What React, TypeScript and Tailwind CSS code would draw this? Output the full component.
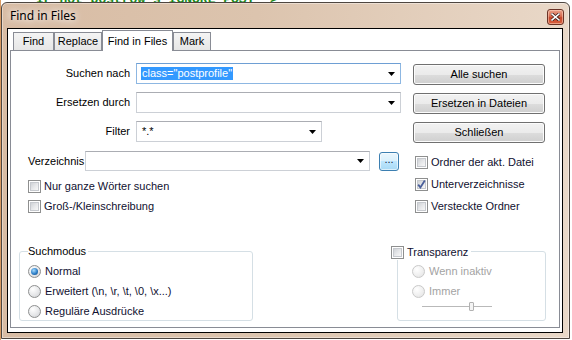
import React from "react";

const btn =
  "flex h-[21px] w-[132px] items-center justify-center rounded-[3px] border border-[#707070] bg-[linear-gradient(#f2f2f2_0%,#ebebeb_50%,#dddddd_50%,#cfcfcf_100%)] text-[11px] text-black shadow-[inset_0_0_0_1px_#fcfcfc]";

function Arrow() {
  return (
    <svg width="7" height="4" viewBox="0 0 7 4" className="shrink-0">
      <path d="M0 0h7L3.5 4z" fill="#000" />
    </svg>
  );
}

function Combo({
  width,
  focused,
  height = 21,
  children,
}: {
  width: string;
  focused?: boolean;
  height?: number;
  children?: React.ReactNode;
}) {
  return (
    <div
      className={`flex items-center justify-between bg-white pl-[3px] pr-[5px] ${width} ${
        height === 21 ? "h-[21px]" : "h-[20px]"
      } ${
        focused
          ? "border border-[#8db7e2] border-t-[#6e9fd4]"
          : "border border-[#ccd0d6] border-t-[#abadb3]"
      }`}
    >
      <div className="flex min-w-0 items-center">{children}</div>
      <Arrow />
    </div>
  );
}

function Check({ checked, label }: { checked?: boolean; label: string }) {
  return (
    <div className="flex h-[13px] items-center gap-[3px] leading-[13px]">
      <div className="relative h-[13px] w-[13px] shrink-0 border border-[#8e8f8f] bg-white p-[1px]">
        <div className="h-full w-full border border-[#c6c9ce] bg-[linear-gradient(135deg,#cfd2d6_0%,#e8e9eb_55%,#f7f7f7_100%)]" />
        {checked && (
          <svg
            width="11"
            height="11"
            viewBox="0 0 11 11"
            className="absolute left-[0px] top-[0px]"
          >
            <path
              d="M2.2 5.6 L4.4 8.4 L8.8 1.6"
              stroke="#4a5f9a"
              strokeWidth="1.8"
              fill="none"
            />
          </svg>
        )}
      </div>
      <span className="text-[#101030]">{label}</span>
    </div>
  );
}

function Radio({
  selected,
  disabled,
  label,
}: {
  selected?: boolean;
  disabled?: boolean;
  label: string;
}) {
  return (
    <div className="flex h-[13px] items-center gap-[4px] leading-[13px]">
      <div
        className={`flex h-[13px] w-[13px] shrink-0 items-center justify-center rounded-full border ${
          disabled
            ? "border-[#c9c9c9] bg-[radial-gradient(circle_at_35%_30%,#ffffff_0%,#eeeeee_60%,#e0e0e0_100%)]"
            : "border-[#8e8f8f] bg-[radial-gradient(circle_at_35%_30%,#ffffff_0%,#e6e7e9_55%,#cdd0d4_100%)]"
        }`}
      >
        {selected && (
          <div className="h-[7px] w-[7px] rounded-full bg-[radial-gradient(circle_at_40%_35%,#a8dcff_0%,#2d7fc8_55%,#0b3f7a_100%)]" />
        )}
      </div>
      <span className={disabled ? "text-[#a3a3a3]" : "text-[#101030]"}>
        {label}
      </span>
    </div>
  );
}

function Tab({ label, active, w }: { label: string; active?: boolean; w: string }) {
  if (active) {
    return (
      <div
        className={`relative z-10 mb-[-1px] flex h-[21px] items-center justify-center border border-b-0 border-[#898c95] bg-white ${w}`}
      >
        {label}
      </div>
    );
  }
  return (
    <div
      className={`flex h-[18px] items-center justify-center border border-b-0 border-[#898c95] bg-[linear-gradient(#f4f4f4,#e6e6e6)] ${w}`}
    >
      {label}
    </div>
  );
}

export default function App() {
  return (
    <div className="relative h-[340px] w-[572px] overflow-hidden bg-white font-['Liberation_Sans',Arial,sans-serif] text-[11px] text-black">
      {/* editor behind the dialog */}
      <div className="absolute left-[36px] top-[-10px] whitespace-pre font-['Liberation_Mono',monospace] text-[13px] font-bold text-[#1a8a1a]">
        IF not postrow s IGNORE POST -&gt;
      </div>
      <div className="absolute left-0 top-0 h-full w-[1px] bg-[#d99a62]" />

      {/* dialog window */}
      <div className="absolute left-[1px] top-[2px] flex h-[337px] w-[569px] flex-col rounded-t-[6px] border border-[#4e4640] bg-[linear-gradient(90deg,#d8bca4_0%,#dcc4ae_45%,#e9d8c8_100%)] pb-[5px] pl-[5px] pr-[6px] shadow-[inset_0_0_0_1px_rgba(255,255,255,0.4)]">
        <div className="flex h-[25px] shrink-0 items-start justify-between">
          <span className="ml-[3px] mt-[5px] font-['Noto_Sans',sans-serif] text-[12px] leading-[16px] text-black [text-shadow:0_0_6px_#fff,0_0_10px_#fff]">
            Find in Files
          </span>
          <div className="mr-[-1px] mt-[6px] flex h-[16px] w-[17px] items-center justify-center rounded-[3px] border border-[#6b3326] bg-[linear-gradient(#eba28b_0%,#d66a4e_45%,#c4452a_55%,#d9613f_100%)] shadow-[inset_0_0_0_1px_rgba(255,220,200,0.5)]">
            <svg width="9" height="8" viewBox="0 0 9 8">
              <path
                d="M1 1 L8 7 M8 1 L1 7"
                stroke="#3a1a14"
                strokeWidth="3"
                strokeLinecap="square"
              />
              <path
                d="M1 1 L8 7 M8 1 L1 7"
                stroke="#fff"
                strokeWidth="1.6"
                strokeLinecap="square"
              />
            </svg>
          </div>
        </div>

        {/* client area */}
        <div className="flex flex-1 flex-col border border-black bg-white px-[2px] pb-[4px]">
          <div className="flex h-[21px] shrink-0 items-end pl-[3px]">
            <Tab label="Find" w="w-[41px]" />
            <Tab label="Replace" w="w-[48px]" />
            <Tab label="Find in Files" w="w-[71px]" active />
            <Tab label="Mark" w="w-[38px]" />
          </div>

          <div className="flex flex-1 flex-col border border-[#898c95] pl-[17px] pr-[13px] pt-[12px]">
            {/* search rows + buttons */}
            <div className="flex">
              <div className="flex w-[373px] flex-col gap-[8px]">
                <div className="flex items-center gap-[6px]">
                  <span className="w-[102px] text-right">Suchen nach</span>
                  <Combo width="w-[265px]" focused>
                    <span className="ml-[1px] bg-[#3399ff] px-[1px] leading-[13px] text-white">
                      class="postprofile"
                    </span>
                  </Combo>
                </div>
                <div className="flex items-center gap-[6px]">
                  <span className="w-[102px] text-right">Ersetzen durch</span>
                  <Combo width="w-[265px]" />
                </div>
                <div className="flex items-center gap-[6px]">
                  <span className="w-[102px] text-right">Filter</span>
                  <Combo width="w-[186px]">
                    <span className="ml-[2px]">*.*</span>
                  </Combo>
                </div>
              </div>
              <div className="ml-[12px] flex flex-col gap-[8px] pt-[1px]">
                <div className={btn}>Alle suchen</div>
                <div className={btn}>Ersetzen in Dateien</div>
                <div className={btn}>Schließen</div>
              </div>
            </div>

            {/* directory + options */}
            <div className="mt-[8px] flex">
              <div className="flex w-[371px] flex-col">
                <div className="flex h-[20px] items-center">
                  <span className="w-[57px]">Verzeichnis</span>
                  <Combo width="w-[285px]" height={20} />
                  <div className="ml-[9px] flex h-[19px] w-[20px] items-center justify-center rounded-[3px] border border-[#3c7fb1] bg-[linear-gradient(#eaf6fd_0%,#d9f0fc_50%,#bee6fd_50%,#a7d9f5_100%)] pb-[3px] text-[11px] leading-none text-[#1a2a40] shadow-[inset_0_0_0_1px_rgba(255,255,255,0.6)]">
                    ...
                  </div>
                </div>
                <div className="mt-[9px]">
                  <Check label="Nur ganze Wörter suchen" />
                </div>
                <div className="mt-[7px]">
                  <Check label="Groß-/Kleinschreibung" />
                </div>
              </div>
              <div className="ml-[16px] flex flex-col gap-[9px] pt-[5px]">
                <Check label="Ordner der akt. Datei" />
                <Check label="Unterverzeichnisse" checked />
                <Check label="Versteckte Ordner" />
              </div>
            </div>

            {/* group boxes */}
            <div className="mt-[38px] flex">
              <div className="relative ml-[-9px] h-[70px] w-[234px] rounded-[3px] border border-[#d5dfe5] pl-[8px] pt-[13px]">
                <span className="absolute left-[8px] top-[-7px] bg-white pr-[2px] leading-[13px]">
                  Suchmodus
                </span>
                <div className="flex flex-col gap-[7px]">
                  <Radio label="Normal" selected />
                  <Radio label="Erweitert (\n, \r, \t, \0, \x...)" />
                  <Radio label="Reguläre Ausdrücke" />
                </div>
              </div>

              <div className="relative ml-[144px] h-[70px] w-[149px] rounded-[3px] border border-[#d5dfe5] pl-[14px] pt-[13px]">
                <div className="absolute left-[-7px] top-[-6px] bg-white pb-[1px] pr-[3px]">
                  <Check label="Transparenz" />
                </div>
                <div className="flex flex-col gap-[7px]">
                  <Radio label="Wenn inaktiv" disabled />
                  <Radio label="Immer" disabled />
                </div>
                <div className="relative ml-[10px] mt-[4px] h-[9px] w-[70px]">
                  <div className="absolute left-0 top-[4px] h-[2px] w-full border-t border-[#b9b9b9] bg-white" />
                  <div className="absolute left-[47px] top-0 h-[9px] w-[5px] rounded-[1px] border border-[#b2b2b2] bg-[#f4f4f4]" />
                </div>
              </div>
            </div>
          </div>
        </div>
      </div>
    </div>
  );
}
